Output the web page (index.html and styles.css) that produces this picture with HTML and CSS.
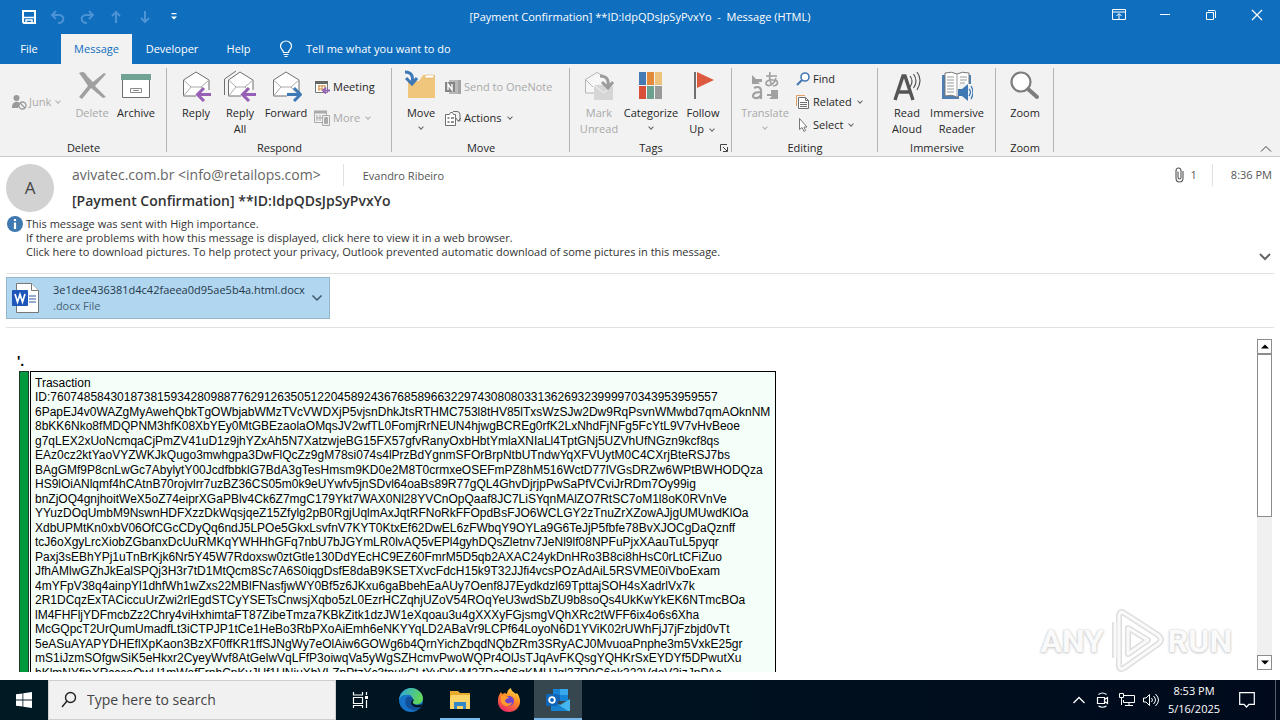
FILE: index.html
```html
<!DOCTYPE html>
<html lang="en">
<head>
<meta charset="utf-8">
<title>[Payment Confirmation] - Message (HTML)</title>
<link rel="stylesheet" href="styles.css">
</head>
<body>
<header class="titlebar">
  <div class="quick">
    <button aria-label="Save"><svg width="16" height="16" viewBox="0 0 16 16" fill="none" stroke="#fff" stroke-width="2"><path d="M2 2h12v12H3l-1-1z"/><path d="M2 8.500h12" stroke-width="1.500"/><path d="M5 14v-3h6v3" stroke-width="1.500"/></svg></button>
    <button aria-label="Undo"><svg width="16" height="16" viewBox="0 0 16 16" fill="none" stroke="#4b93d4" stroke-width="2"><path d="M6 2L2 6l4 4M2 6h7c6 0 6 8-1 8"/></svg></button>
    <button aria-label="Redo"><svg width="16" height="16" viewBox="0 0 16 16" fill="none" stroke="#4b93d4" stroke-width="2"><path d="M10 2l4 4-4 4M14 6H7c-6 0-6 8 1 8"/></svg></button>
    <button aria-label="Previous item"><svg width="16" height="16" viewBox="0 0 16 16" fill="none" stroke="#4b93d4" stroke-width="2"><path d="M8 14V3M4 7l4-4 4 4"/></svg></button>
    <button aria-label="Next item"><svg width="16" height="16" viewBox="0 0 16 16" fill="none" stroke="#4b93d4" stroke-width="2"><path d="M8 2v11M4 9l4 4 4-4"/></svg></button>
    <button aria-label="Customize toolbar"><svg width="8" height="8" viewBox="0 0 8 8"><path d="M1.500 0h5v1.300h-5zM1 3.500h6L4 6.500z" fill="#fff"/></svg></button>
  </div>
  <h1 class="caption">[Payment Confirmation] **ID:IdpQDsJpSyPvxYo&nbsp; -&nbsp; Message (HTML)</h1>
  <div class="winctl">
    <button aria-label="Ribbon display options"><svg width="14" height="12" viewBox="0 0 14 12" fill="none" stroke="#fff"><path d="M.5.500h13v10H.5zM.5 3h13M7 10V5M4.500 7L7 4.500 9.500 7"/></svg></button>
    <button aria-label="Minimize"><svg width="12" height="12" viewBox="0 0 12 12" stroke="#fff"><path d="M1 5.500h10"/></svg></button>
    <button aria-label="Restore"><svg width="12" height="12" viewBox="0 0 12 12" fill="none" stroke="#fff"><path d="M1.500 3.500h7v7h-7zM3 1.500h6.500q1 0 1 1V9"/></svg></button>
    <button aria-label="Close"><svg width="12" height="12" viewBox="0 0 12 12" stroke="#fff" stroke-width="1.200"><path d="M1 1l10 10M11 1L1 11"/></svg></button>
  </div>
</header>
<nav class="tabs">
  <button class="tab file">File</button>
  <button class="tab active">Message</button>
  <button class="tab dev">Developer</button>
  <button class="tab help">Help</button>
  <button class="tell"><svg width="14" height="18" viewBox="0 0 14 18" fill="none" stroke="#fff" stroke-width="1.200"><path d="M4.500 12.500c0-2.500-3-3-3-6.500a5.500 5 0 0 1 11 0c0 3.500-3 4-3 6.500zM4.500 14.500h5M5.500 16.500h3"/></svg>Tell me what you want to do</button>
</nav>

<section class="ribbon" aria-label="Ribbon">
  <div class="group">
    <div class="tools g-delete">
      <button class="small off junk"><svg width="16" height="16" viewBox="0 0 16 16"><circle cx="5.500" cy="4" r="3" fill="#9a9a9a"/><path d="M1 13c0-6 8-7 8-2l-2 3H1z" fill="#9a9a9a"/><circle cx="11.500" cy="11.500" r="3.500" fill="#f2f2f2" stroke="#9a9a9a" stroke-width="1.300"/><path d="M9 9l5 5" stroke="#9a9a9a" stroke-width="1.300"/></svg>Junk<i class="chev"></i></button>
      <button class="big off"><svg width="32" height="32" viewBox="0 0 32 32"><path d="M3 3c4-2 6-1 8 3l6 6L28 3l2 1-11 12 11 11-3 1-12-10L6 29l-3-2 9-11C9 11 6 7 3 3z" fill="#a0a0a0"/></svg><span>Delete</span></button>
      <button class="big"><svg width="32" height="32" viewBox="0 0 32 32"><path d="M2.500 9.500h27v18h-27z" fill="#fff" stroke="#6f6f6f"/><path d="M1 4h30v6H1z" fill="#70a393"/><path d="M10.500 18.500h11v4h-11zM13 20.500h6" fill="none" stroke="#8a8a8a"/></svg><span>Archive</span></button>
    </div>
    <h2>Delete</h2>
  </div>
  <div class="group">
    <div class="tools">
      <button class="big"><svg width="32" height="32" viewBox="0 0 32 32"><path d="M3.500 10L16 2l13 8v16H3.500z" fill="#fff" stroke="#6f6f6f"/><path d="M3.500 10L11 17h10l8-7M3.500 26L11 17M29 26l-8-9" fill="none" stroke="#aaa"/><path d="M31 20v9H16v-4l6-5z" fill="#f2f2f2"/><path d="M31 24.500H18M24 18l-6.500 6.500L24 31" fill="none" stroke="#9560b5" stroke-width="3"/></svg><span>Reply</span></button>
      <button class="big"><svg width="32" height="32" viewBox="0 0 32 32"><path d="M.5 25V9L12 1" fill="none" stroke="#6f6f6f"/><path d="M4.500 10L16 2l13 8v16H4.500z" fill="#fff" stroke="#6f6f6f"/><path d="M4.500 10L12 17h9l8-7M4.500 26L12 17M29 26l-8-9" fill="none" stroke="#aaa"/><path d="M31 20v9H17v-4l6-5z" fill="#f2f2f2"/><path d="M32 24.500H19M25 18l-6.500 6.500L25 31" fill="none" stroke="#9560b5" stroke-width="3"/></svg><span>Reply<br>All</span></button>
      <button class="big fwd"><svg width="32" height="32" viewBox="0 0 32 32"><path d="M3.500 10L16 2l13 8v16H3.500z" fill="#fff" stroke="#6f6f6f"/><path d="M3.500 10L11 17h10l8-7M3.500 26L11 17M29 26l-8-9" fill="none" stroke="#aaa"/><path d="M31 22v8H17v-8z" fill="#f2f2f2"/><path d="M17 24.500h13M24 18l6.500 6.500L24 31" fill="none" stroke="#3f79b5" stroke-width="3"/></svg><span>Forward</span></button>
      <div class="stack two">
        <button class="small"><svg width="16" height="16" viewBox="0 0 16 16"><path d="M1.500 2.500h12v11h-12z" fill="#fff" stroke="#777"/><path d="M1 2h13v3H1z" fill="#666"/><path d="M4 7h7M4 10h5M5 6v6M8 6v6M11 6v3" stroke="#d08b3c"/><path d="M16 11.500H9M12 8.500l-3 3 3 3" fill="none" stroke="#9560b5" stroke-width="1.800"/></svg>Meeting</button>
        <button class="small off"><svg width="16" height="16" viewBox="0 0 16 16" fill="none" stroke="#aaa"><path d="M.5 1.500h12v11H.5z"/><path d="M0 2h13" stroke-width="3"/><path d="M3 5v6M6 5v6M2 8h7" /><path d="M8.500 5.500h7v10h-7z" fill="#f2f2f2"/><path d="M10.500 7.500h3v6h-3z" fill="#aaa"/></svg>More<i class="chev"></i></button>
      </div>
    </div>
    <h2>Respond</h2>
  </div>
  <div class="group">
    <div class="tools g-move">
      <button class="big move"><svg width="32" height="32" viewBox="0 0 32 32"><path d="M3 28V11h11l4-6h12v23z" fill="#efc67c"/><path d="M19 8l2-3h8v3z" fill="#fff" stroke="#d7a95b" stroke-width=".6"/><path d="M0 2c8 0 8 6 7 11M1 8l6 6 5-6" fill="none" stroke="#3f79b5" stroke-width="3"/></svg><span>Move</span><i class="chev"></i></button>
      <div class="stack two">
        <button class="small off"><svg width="16" height="16" viewBox="0 0 16 16"><path d="M4 1h12v14H4z" fill="#b9b9b9"/><path d="M13 1h3v14h-3z" fill="#a3a3a3"/><path d="M0 3h10v10H0z" fill="#858585"/><path d="M3 11V5l4 6V5" fill="none" stroke="#fff" stroke-width="1.400"/></svg>Send to OneNote</button>
        <button class="small"><svg width="16" height="16" viewBox="0 0 16 16" fill="none" stroke="#6f6f6f"><path d="M.5 4.500h4l1-2h2l1 2h2v11H.5z" fill="#fff"/><path d="M2.500 8h2M6 8h3M2.500 12h2M6 12h3" stroke-width="1.500"/><path d="M8 1.500h4q3 0 3 3V11h-2M11 8l2 3 3-3"/></svg>Actions<i class="chev"></i></button>
      </div>
    </div>
    <h2>Move</h2>
  </div>
  <div class="group">
    <div class="tools">
      <button class="big off"><svg width="32" height="32" viewBox="0 0 32 32"><path d="M11 23H2.500V9.500L14 2.500l11 6" fill="#f7f7f7" stroke="#b5b5b5"/><path d="M2.500 9.500L10 17" stroke="#b5b5b5"/><path d="M11 15h19v15H11z" fill="#d6d6d6"/><path d="M11 15l9.500 8 9.500-8" fill="none" stroke="#f5f5f5"/><path d="M17 6c7 0 9 4 8 11M19 12l6 6 5-6" fill="none" stroke="#9c9c9c" stroke-width="3"/></svg><span>Mark<br>Unread</span></button>
      <button class="big cat"><svg width="32" height="32" viewBox="0 0 32 32"><path d="M4 2h7v13H4z" fill="#4479b4"/><path d="M12 2h7v13h-7z" fill="#e18a3c"/><path d="M20 2h7v13h-7z" fill="#ecc27c"/><path d="M4 16h7v13H4z" fill="#d9503a"/><path d="M12 16h7v13h-7z" fill="#6ca08f"/><path d="M20 16h7v13h-7z" fill="#9a9a9a"/></svg><span>Categorize</span><i class="chev"></i></button>
      <button class="big"><svg width="32" height="32" viewBox="0 0 32 32"><path d="M8 2v27" stroke="#6f6f6f" stroke-width="2"/><path d="M10 2l17 8-17 8z" fill="#dc5940"/></svg><span>Follow<br>Up <i class="chev"></i></span></button>
    </div>
    <h2>Tags</h2>
    <button class="launcher" aria-label="Tags options"><svg width="8" height="8" viewBox="0 0 8 8" fill="none" stroke="#444"><path d="M.5 7V.500H7M3 3l4 4M7.500 3v4.500H3"/></svg></button>
  </div>
  <div class="group">
    <div class="tools g-edit">
      <button class="big off trans"><svg width="32" height="32" viewBox="0 0 32 32"><path d="M3 5l4 4h6v3H9l2 2H3zM29 29h-9l3-3h-5v-2h4v-4h7z" fill="#a0a0a0"/><path d="M17 6h11M21 2c-1 6 0 10 2 13M27 8c-1 5-6 9-9 7s1-6 6-5c6 0 6 5 0 6" fill="none" stroke="#a0a0a0" stroke-width="1.700"/><path d="M5 18c4-2 7-1 7 3v8M12 22c-5 0-8 1-8 4s6 3 8-1" fill="none" stroke="#a0a0a0" stroke-width="2.200"/></svg><span>Translate</span><i class="chev"></i></button>
      <div class="stack three">
        <button class="small"><svg width="14" height="16" viewBox="0 0 14 16" fill="none" stroke="#4479b4"><circle cx="9" cy="6" r="4" stroke-width="1.600" fill="#fff"/><path d="M6 9l-5 5" stroke-width="2.200"/></svg>Find</button>
        <button class="small"><svg width="14" height="16" viewBox="0 0 14 16" fill="none"><path d="M.5 12V1.500H9" stroke="#e0a060"/><path d="M2.500 3.500h7l3 3v8h-10z" fill="#fff" stroke="#6f6f6f"/><path d="M9.500 3.500v3h3M4 8.500h7M4 10.500h7M4 12.500h7" stroke="#6f6f6f"/></svg>Related<i class="chev"></i></button>
        <button class="small"><svg width="14" height="16" viewBox="0 0 14 16"><path d="M3.500 1.500v11l2.500-2 2 4 1.500-1-1.500-3.500h3z" fill="#fff" stroke="#777"/></svg>Select<i class="chev"></i></button>
      </div>
    </div>
    <h2>Editing</h2>
  </div>
  <div class="group">
    <div class="tools">
      <button class="big"><svg width="32" height="32" viewBox="0 0 32 32" fill="none" stroke="#555"><path d="M4 30L12 6h2l8 24M7 22h12" stroke-width="3.400"/><path d="M19 6q4 5 0 11M22.500 4q5 7 0 14M26 2q6 8 0 18" stroke-width="1.200"/></svg><span>Read<br>Aloud</span></button>
      <button class="big imm"><svg width="32" height="32" viewBox="0 0 32 32"><path d="M1 5h29v24H1z" fill="#4d7fb5"/><path d="M4 3q7-2 12 1 5-3 12-1v23q-7-2-12 1-5-3-12-1z" fill="#fff" stroke="#777"/><path d="M16 4v22M6 7h7M6 10h7M6 13h7M6 16h7M6 19h7M6 22h7M19 7h7M19 10h7M19 13h5" stroke="#999"/><path d="M18 14h14v17H18z" fill="#f2f2f2"/><path d="M17 19h4l6-5v17l-6-5h-4z" fill="#3f79b5"/><path d="M28 19q3 3 0 7M30 16q4 6 0 13" fill="none" stroke="#3f79b5" stroke-width="1.300"/></svg><span>Immersive<br>Reader</span></button>
    </div>
    <h2>Immersive</h2>
  </div>
  <div class="group">
    <div class="tools">
      <button class="big"><svg width="32" height="32" viewBox="0 0 32 32"><circle cx="12" cy="12" r="9.500" fill="#fff" stroke="#7d7d7d" stroke-width="2.200"/><path d="M19 19l9 8" stroke="#7d7d7d" stroke-width="4" stroke-linecap="round"/></svg><span>Zoom</span></button>
    </div>
    <h2>Zoom</h2>
  </div>
  <button class="collapse" aria-label="Collapse the ribbon"><svg width="12" height="8" viewBox="0 0 12 8" fill="none" stroke="#444"><path d="M1 6.500l5-5 5 5"/></svg></button>
</section>

<main class="message">
  <section class="head">
    <div class="avatar">A</div>
    <div class="who">
      <div class="from"><span class="sender">avivatec.com.br &lt;info@retailops.com&gt;</span><span class="to">Evandro Ribeiro</span></div>
      <h2 class="subject">[Payment Confirmation] **ID:IdpQDsJpSyPvxYo</h2>
    </div>
    <div class="meta">
      <svg width="9" height="16" viewBox="0 0 9 16" fill="none" stroke="#555" stroke-width="1.100"><path d="M3 4.500v6q0 1.500 1.500 1.500T6 10.500V4Q6 1 3.500 1T1 4v7q0 4 3.500 4T8 11V4"/></svg>
      <span>1</span><time>8:36 PM</time>
    </div>
  </section>
  <section class="info">
    <svg width="16" height="16" viewBox="0 0 16 16"><circle cx="8" cy="8" r="8" fill="#3f79b0"/><path d="M8 3v2M8 6.500V13" stroke="#fff" stroke-width="2.200"/></svg>
    <div>
      <p>This message was sent with High importance.</p>
      <p>If there are problems with how this message is displayed, click here to view it in a web browser.</p>
      <p>Click here to download pictures. To help protect your privacy, Outlook prevented automatic download of some pictures in this message.</p>
    </div>
    <button class="expand" aria-label="Expand header"><svg width="12" height="8" viewBox="0 0 12 8" fill="none" stroke="#666" stroke-width="2"><path d="M1 1l5 5 5-5"/></svg></button>
  </section>
  <section class="files">
    <button class="file-card">
      <svg width="28" height="30" viewBox="0 0 28 30"><path d="M4.500.500h15l7 7v22h-22z" fill="#fff" stroke="#777"/><path d="M19.500.500v7h7" fill="#fff" stroke="#777"/><path d="M17 13h7M17 16h7M17 19h7" stroke="#2b579a"/><rect y="7" width="16" height="16" rx="1" fill="#1d55b8"/><path d="M3 11l2.500 8L8 11.500l2.500 7.500L13 11" fill="none" stroke="#fff" stroke-width="1.700"/></svg>
      <span class="file-text"><span class="name">3e1dee436381d4c42faeea0d95ae5b4a.html.docx</span><span>.docx File</span></span>
      <svg width="12" height="8" viewBox="0 0 12 8" fill="none" stroke="#3f5568" stroke-width="1.500"><path d="M1.500 1.500L6 6l4.500-4.500"/></svg>
    </button>
  </section>
  <section class="reading">
    <article class="mail">
      <p class="lead">'.</p>
      <div class="quote">
        <div class="bar"></div>
        <div class="lines">
          <p>Trasaction</p>
          <p>ID:7607485843018738159342809887762912635051220458924367685896632297430808033136269323999970343953959557</p>
          <p>6PapEJ4v0WAZgMyAwehQbkTgOWbjabWMzTVcVWDXjP5vjsnDhkJtsRTHMC753l8tHV85lTxsWzSJw2Dw9RqPsvnWMwbd7qmAOknNM</p>
          <p>8bKK6Nko8fMDQPNM3hfK08XbYEy0MtGBEzaolaOMqsJV2wfTL0FomjRrNEUN4hjwgBCREg0rfK2LxNhdFjNFg5FcYtL9V7vHvBeoe</p>
          <p>g7qLEX2xUoNcmqaCjPmZV41uD1z9jhYZxAh5N7XatzwjeBG15FX57gfvRanyOxbHbtYmlaXNIaLl4TptGNj5UZVhUfNGzn9kcf8qs</p>
          <p>EAz0cz2ktYaoVYZWKJkQugo3mwhgpa3DwFlQcZz9gM78si074s4lPrzBdYgnmSFOrBrpNtbUTndwYqXFVUytM0C4CXrjBteRSJ7bs</p>
          <p>BAgGMf9P8cnLwGc7AbylytY00JcdfbbklG7BdA3gTesHmsm9KD0e2M8T0crmxeOSEFmPZ8hM516WctD77lVGsDRZw6WPtBWHODQza</p>
          <p>HS9lOiANlqmf4hCAtnB70rojvlrr7uzBZ36CS05m0k9eUYwfv5jnSDvl64oaBs89R77gQL4GhvDjrjpPwSaPfVCviJrRDm7Oy99ig</p>
          <p>bnZjOQ4gnjhoitWeX5oZ74eiprXGaPBlv4Ck6Z7mgC179Ykt7WAX0Nl28YVCnOpQaaf8JC7LiSYqnMAlZO7RtSC7oM1l8oK0RVnVe</p>
          <p>YYuzDOqUmbM9NswnHDFXzzDkWqsjqeZ15Zfylg2pB0RgjUqlmAxJqtRFNoRkFFOpdBsFJO6WCLGY2zTnuZrXZowAJjgUMUwdKlOa</p>
          <p>XdbUPMtKn0xbV06OfCGcCDyQq6ndJ5LPOe5GkxLsvfnV7KYT0KtxEf62DwEL6zFWbqY9OYLa9G6TeJjP5fbfe78BvXJOCgDaQznff</p>
          <p>tcJ6oXgyLrcXiobZGbanxDcUuRMKqYWHHhGFq7nbU7bJGYmLR0lvAQ5vEPl4gyhDQsZletnv7JeNl9lf08NPFuPjxXAauTuL5pyqr</p>
          <p>Paxj3sEBhYPj1uTnBrKjk6Nr5Y45W7Rdoxsw0ztGtle130DdYEcHC9EZ60FmrM5D5qb2AXAC24ykDnHRo3B8ci8hHsC0rLtCFiZuo</p>
          <p>JfhAMlwGZhJkEalSPQj3H3r7tD1MtQcm8Sc7A6S0iqgDsfE8daB9KSETXvcFdcH15k9T32JJfi4vcsPOzAdAiL5RSVME0iVboExam</p>
          <p>4mYFpV38q4ainpYl1dhfWh1wZxs22MBlFNasfjwWY0Bf5z6JKxu6gaBbehEaAUy7Oenf8J7Eydkdzl69TpttajSOH4sXadrlVx7k</p>
          <p>2R1DCqzExTACiccuUrZwi2rlEgdSTCyYSETsCnwsjXqbo5zL0EzrHCZqhjUZoV54ROqYeU3wdSbZU9b8soQs4UkKwYkEK6NTmcBOa</p>
          <p>lM4FHFljYDFmcbZz2Chry4viHxhimtaFT87ZibeTmza7KBkZitk1dzJW1eXqoau3u4gXXXyFGjsmgVQhXRc2tWFF6ix4o6s6Xha</p>
          <p>McGQpcT2UrQumUmadfLt3iCTPJP1tCe1HeBo3RbPXoAiEmh6eNKYYqLD2ABaVr9LCPf64LoyoN6D1YViK02rUWhFjJ7jFzbjd0vTt</p>
          <p>5eASuAYAPYDHEflXpKaon3BzXF0ffKR1ffSJNgWy7eOlAiw6GOWg6b4QrnYichZbqdNQbZRm3SRyACJ0MvuoaPnphe3m5VxkE25gr</p>
          <p>mS1iJzmSOfgwSiK5eHkxr2CyeyWvf8AtGelwVqLFfP3oiwqVa5yWgSZHcmvPwoWQPr4OlJsTJqAvFKQsgYQHKrSxEYDYf5DPwutXu</p>
          <p>hKlmNYfipXRcccoQwU1mWefFrnhCnKvJUf1UNjuXbVLZpPtzYc3tpukCLtYvDKvM37Pcz96qKMHJgl37P9C6ek322VdoV3izJpPAc</p>
        </div>
      </div>
    </article>
    <div class="scroll">
      <button aria-label="Scroll up"><svg width="8" height="5" viewBox="0 0 8 5"><path d="M0 4.500L4 .500l4 4z"/></svg></button>
      <div class="track"><div class="thumb"></div></div>
      <button aria-label="Scroll down"><svg width="8" height="5" viewBox="0 0 8 5"><path d="M0 .500l4 4 4-4z"/></svg></button>
    </div>
    <div class="watermark" aria-hidden="true">
      <span>ANY</span>
      <svg width="56" height="66" viewBox="0 0 56 66" fill="none" stroke-linejoin="round"><path d="M7 50V14M16 5l34 22q6 5 0 9L16 60q-5 3-5-3V9q0-7 5-4zM20 20l20 12-20 14z" stroke="#dedede" stroke-width="6"/><path d="M7 50V14M16 5l34 22q6 5 0 9L16 60q-5 3-5-3V9q0-7 5-4zM20 20l20 12-20 14z" stroke="#fafafa" stroke-width="3"/></svg>
      <span>RUN</span>
    </div>
  </section>
</main>

<footer class="taskbar">
  <button class="start" aria-label="Start"><svg width="16" height="16" viewBox="0 0 16 16" fill="#fff"><path d="M0 2.300L6.500 1.400v6.200H0zM7.300 1.300L16 0v7.600H7.300zM0 8.400h6.500v6.200L0 13.700zM7.300 8.400H16V16l-8.700-1.300z"/></svg></button>
  <label class="search"><svg width="16" height="18" viewBox="0 0 16 18" fill="none" stroke="#222" stroke-width="1.400"><circle cx="9.500" cy="6.500" r="5"/><path d="M6 10l-5 6"/></svg><input type="text" placeholder="Type here to search" aria-label="Search"></label>
  <button class="app view" aria-label="Task View"><svg width="16" height="18" viewBox="0 0 16 18" fill="none" stroke="#fff" stroke-width="1.200"><path d="M1.500 1v3h9V1M1.500 6.500h9v6h-9zM1.500 17v-2.500h9V17M14.500 1v3M14.500 9v8"/><path d="M13 5h3v3h-3z" fill="#fff" stroke="none"/></svg></button>
  <button class="app" aria-label="Edge"><svg width="26" height="26" viewBox="0 0 26 26"><defs><linearGradient id="e1" x1="0" y1="0" x2="1" y2=".3"><stop offset="0" stop-color="#2aa5e0"/><stop offset="1" stop-color="#62d65a"/></linearGradient></defs><circle cx="13" cy="13" r="12" fill="#1673c8"/><path d="M1 13C2 6 7 1 13 1s12 5 12 10c0 5-4 7-8 6-4 0-3-2-2-4 0-4-3-6-7-5-4 0-6 2-7 5z" fill="url(#e1)"/><path d="M9 10c-4 5-1 12 6 13 3 1 7-1 9-5-4 2-9 2-10-2-1-2 1-3 1-4-2-3-4-3-6-2z" fill="#124f9a"/><path d="M15 12c2 1-1 3 0 4 2 3 6 2 9 1l-1 3c-5 1-9 0-10-4 0-2 1-2 2-4z" fill="#001824"/></svg></button>
  <button class="app open" aria-label="File Explorer"><svg width="22" height="20" viewBox="0 0 22 20"><path d="M1 1h8l2 2h10v16H1z" fill="#e7a92e"/><path d="M2 5h19v14H1V8z" fill="#fbd567"/><path d="M5 19v-7h12v7h-3v-3H8v3z" fill="#3487c7"/></svg></button>
  <button class="app" aria-label="Firefox"><svg width="24" height="24" viewBox="0 0 24 24"><defs><linearGradient id="f1" x1=".8" y1="0" x2=".3" y2="1"><stop offset="0" stop-color="#ffe447"/><stop offset=".45" stop-color="#ff8a24"/><stop offset="1" stop-color="#ec2868"/></linearGradient></defs><path d="M4 4l1 2 3-1 2 1c0-3 2-5 4-6 0 3 3 4 5 6l1-1c7 9 1 19-8 19C1 24-2 12 4 4z" fill="url(#f1)"/><circle cx="12" cy="13" r="5" fill="#7442cc"/><path d="M4 8c4-2 5 1 8 1-1 2-4 2-4 4 1 3 5 3 7 1-1 6-10 5-11-1z" fill="#ff9c2b"/></svg></button>
  <button class="app current" aria-label="Outlook"><svg width="24" height="22" viewBox="0 0 24 22"><path d="M7 0h15v12H7z" fill="#1685d8"/><path d="M14 0h8v6h-8z" fill="#38a9ee"/><path d="M7 6h7v6H7z" fill="#1064b3"/><path d="M5 11l9 5 10-6v12H5z" fill="#45b5ef"/><path d="M5 11l17 11H5z" fill="#1783d0"/><rect y="5" width="12" height="12" rx="1" fill="#0f65b8"/><circle cx="6" cy="11" r="2.800" fill="none" stroke="#fff" stroke-width="1.800"/></svg></button>
  <div class="tray">
    <button aria-label="Show hidden icons"><svg width="14" height="14" viewBox="0 0 14 14" fill="none" stroke="#fff" stroke-width="1.300"><path d="M1.500 10L7 4.500l5.500 5.500"/></svg></button>
    <button aria-label="Camera"><svg width="14" height="16" viewBox="0 0 14 16" fill="none" stroke="#fff" stroke-width="1.200"><path d="M1.500 5.500h7v6h-7zM8.500 7.500l3-2v6l-3-2M2.500 2.500q4-3 8 0M2.500 14q4 2.500 8 0"/></svg></button>
    <button aria-label="Network"><svg width="16" height="14" viewBox="0 0 16 14" fill="none" stroke="#fff"><path d="M5 2.500h10.500v7h-11V7M10 9.500v3M6 12.500h8M.5.500h4v4h-4zM2.500 4.500V12"/></svg></button>
    <button aria-label="Volume"><svg width="16" height="14" viewBox="0 0 16 14" fill="none" stroke="#fff"><path d="M.5 5H3l3.500-3.500v11L3 9H.5zM8.500 5q2 2 0 4M10.500 3q4 4 0 8M12.500 1q6 6 0 12"/></svg></button>
    <div class="clock"><time>8:53 PM</time><time>5/16/2025</time></div>
    <button class="notes" aria-label="Notifications"><svg width="16" height="16" viewBox="0 0 16 16" fill="none" stroke="#fff" stroke-width="1.200"><path d="M.7.700h14.600v11.600H10L7.500 15 5 12.300H.7z"/></svg></button>
    <span class="peek"></span>
  </div>
</footer>
</body>
</html>
```
FILE: styles.css
```css
* { box-sizing: border-box; }
body {
  margin: 0;
  height: 100vh;
  display: flex;
  flex-direction: column;
  overflow: hidden;
  background: #fff;
  color: #262626;
  font: 11px/16px "Open Sans", "Noto Sans", sans-serif;
}
h1, h2, p { margin: 0; font: inherit; }
button { border: 0; padding: 0; background: none; color: inherit; font: inherit; }
svg { display: block; flex: none; }

/* title bar and tabs */
.titlebar { display: grid; grid-template-columns: 1fr auto 1fr; align-items: center; height: 34px; background: #106ebe; color: #fff; }
.quick { display: flex; padding-left: 14px; }
.quick button { width: 29px; height: 32px; display: grid; place-items: center; }
.winctl { display: flex; justify-content: flex-end; align-self: start; }
.winctl button { width: 46px; height: 30px; display: grid; place-items: center; }
.tabs { display: flex; height: 30px; background: #106ebe; color: #fff; }
.tab.file { width: 58px; margin-right: 3px; }
.tab.active { width: 71px; background: #f2f2f2; color: #106ebe; }
.tab.dev { width: 80px; }
.tab.help { width: 53px; }
.tell { display: flex; align-items: center; gap: 13px; padding-left: 14px; }

/* ribbon */
.ribbon { display: grid; grid-template-columns: 167px 225px 178px 162px 146px 118px 58px 1fr; height: 93px; background: #f2f2f2; border-bottom: 1px solid #c8c8c8; }
.group { position: relative; display: flex; flex-direction: column; }
.group::after { content: ""; position: absolute; right: 0; top: 4px; bottom: 4px; width: 1px; background: #b4b4b4; }
.tools { display: flex; flex: 1; padding-left: 7px; }
.g-delete { padding-left: 0; }
.g-move { padding-left: 9px; }
.g-edit { padding-left: 8px; }
.group h2 { text-align: center; height: 16px; }
.big { width: 44px; display: flex; flex-direction: column; align-items: center; padding-top: 6px; white-space: nowrap; }
.big span { margin-top: 3px; }
.big > .chev { margin-top: 4px; }
.fwd { width: 48px; }
.move { width: 40px; }
.cat { width: 60px; }
.trans { width: 50px; }
.imm { width: 56px; }
.stack { display: flex; flex-direction: column; padding-left: 4px; }
.two { gap: 15px; padding-top: 15px; }
.three { gap: 7px; padding: 7px 0 0 6px; }
.small { display: flex; align-items: center; gap: 3px; height: 16px; white-space: nowrap; }
.junk { width: 70px; padding-left: 11px; margin-top: 30px; gap: 2px; }
.off { color: #a9a9a9; }
.chev { display: inline-block; width: 4px; height: 4px; border: solid #666; border-width: 0 1px 1px 0; rotate: 45deg; margin: 0 3px 2px 3px; flex: none; }
.off .chev { border-color: #b0b0b0; }
.launcher { position: absolute; right: 4px; bottom: 4px; }
.collapse { justify-self: end; align-self: end; padding: 0 8px 3px 0; }

/* message header */
.message { flex: 1; min-height: 0; display: flex; flex-direction: column; }
.head { display: flex; padding: 7px 8px 0 6px; height: 60px; color: #555; }
.avatar { width: 48px; height: 48px; border-radius: 50%; background: #d2d2d2; display: grid; place-items: center; font-size: 17px; color: #444; }
.who { flex: 1; padding-left: 18px; }
.from { display: flex; height: 22px; line-height: 22px; }
.sender { font-size: 14px; padding-right: 22px; color: #666; }
.to { padding: 1px 0 0 19px; border-left: 1px solid #e1e1e1; }
.subject { font-size: 14px; font-weight: 600; line-height: 20px; margin-top: 5px; color: #333; }
.meta { display: flex; align-items: center; height: 22px; }
.meta span { padding: 0 15px 0 7px; line-height: 22px; }
.meta time { border-left: 1px solid #e1e1e1; padding-left: 18px; line-height: 22px; }
.info { display: flex; gap: 3px; margin: 0 6px 0 7px; height: 57px; line-height: 14px; color: #333; border-bottom: 1px solid #e1e1e1; }
.info > svg { margin-top: -1px; }
.info div { flex: 1; }
.expand { align-self: end; padding: 0 3px 12px 0; }
.files { margin: 0 6px; padding: 3px 0 8px; border-bottom: 1px solid #e1e1e1; }
.file-card { display: flex; align-items: center; width: 324px; height: 42px; padding: 0 6px 0 5px; border: 1px solid #96b6cc; background: #b1d6f0; text-align: left; color: #4a6578; }
.file-text { flex: 1; padding-left: 13px; display: flex; flex-direction: column; }
.name { color: #26384a; }

/* message body */
.reading { position: relative; flex: 1; min-height: 0; display: flex; padding: 11px 8px 8px 17px; }
.mail { flex: 1; min-width: 0; overflow: hidden; color: #000; font: 12px/14px "Liberation Sans", Arial, sans-serif; }
.lead { font-size: 14px; font-weight: 700; line-height: 16px; padding: 14px 0 2px; }
.quote { display: flex; gap: 1px; padding-left: 2px; }
.bar { width: 10px; background: #009a3d; border: 1px solid #1c3c28; }
.lines { width: 746px; border: 1px solid #000; background: #f5fffa; padding: 4px; display: grid; grid-auto-rows: 14px 15px; white-space: nowrap; }
.scroll { display: flex; flex-direction: column; width: 15px; margin-bottom: 2px; }
.scroll button { height: 15px; border: 1px solid #8c8c8c; background: #fff; display: grid; place-items: center; }
.track { flex: 1; background: #f0f0f0; }
.thumb { height: 54%; border: 1px solid #8c8c8c; background: #fff; }
.watermark { position: absolute; right: 48px; bottom: 6px; display: flex; align-items: center; gap: 4px; color: #fafafa; font: 700 32px/40px Roboto, sans-serif; text-shadow: 0 0 2px #c4c4c4, 0 1px 3px #ccc; }

/* taskbar */
.taskbar { display: flex; height: 40px; background: linear-gradient(90deg, #001a24, #000a1c); color: #fff; }
.start { width: 48px; display: grid; place-items: center; }
.search { display: flex; align-items: center; gap: 10px; width: 288px; padding: 0 12px; background: #f1f1f1; border: 1px solid #cfcfcf; }
.search input { flex: 1; min-width: 0; border: 0; padding: 0; background: none; font: 14px/20px "Open Sans", sans-serif; }
.search input::placeholder { color: #444; opacity: 1; }
.app { width: 48px; margin-right: 1px; display: grid; place-items: center; }
.view { margin-right: 3px; }
.current { background: #37474f; box-shadow: inset 0 -2px #76b9ed; }
.open { background: linear-gradient(#76b9ed, #76b9ed) center bottom / 40px 2px no-repeat; }
.tray { margin-left: auto; display: flex; align-items: center; }
.tray > button { width: 24px; height: 40px; display: grid; place-items: center; }
.clock { display: flex; flex-direction: column; align-items: center; width: 62px; line-height: 18px; }
.tray > .notes { width: 44px; }
.peek { width: 5px; margin-left: 6px; height: 40px; border-left: 1px solid #53606c; }
```
